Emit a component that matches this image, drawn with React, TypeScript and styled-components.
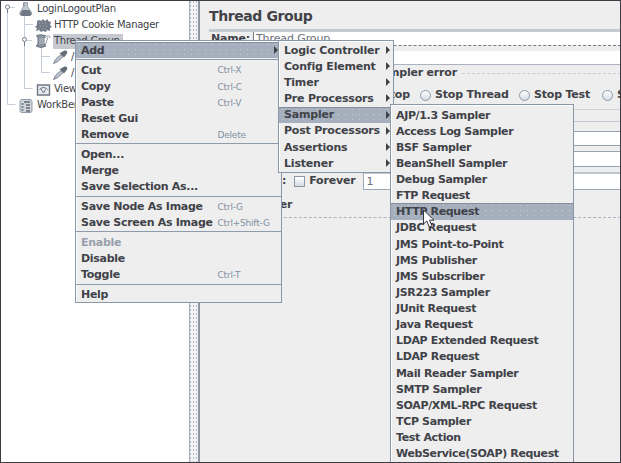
import React from "react";
import styled, { createGlobalStyle } from "styled-components";

const GlobalStyle = createGlobalStyle`
  * { box-sizing: border-box; }
  html, body { margin: 0; width: 621px; height: 463px; overflow: hidden; }
  body { font: 11px/16px "DejaVu Sans", sans-serif; color: #404248; }
`;

const Frame = styled.div`
  position: relative;
  display: flex;
  width: 621px;
  height: 463px;
  overflow: hidden;
  background: #eee;
  &::after {
    content: "";
    position: absolute;
    inset: 0;
    border: 1px solid #3e3c40;
    pointer-events: none;
    z-index: 10;
  }
`;

const Tree = styled.aside`
  position: relative;
  width: 189px;
  padding-top: 1px;
  background: #fff;
  overflow: hidden;
`;

const TreeRow = styled.div<{ $indent: number }>`
  display: flex;
  align-items: center;
  height: 16.1px;
  padding-left: ${(p) => p.$indent}px;
  font-size: 10px;
  white-space: nowrap;
  svg { flex: none; }
`;

const TreeLabel = styled.span<{ $selected?: boolean; $gap?: number }>`
  height: 15px;
  line-height: 14px;
  margin-left: ${(p) => p.$gap ?? 1}px;
  padding: 0 3px 0 1px;
  letter-spacing: -0.25px;
  background: ${(p) => (p.$selected ? "#c6cad0" : "transparent")};
`;

const TreeLines = styled.svg`
  position: absolute;
  left: 0;
  top: 0;
`;

const Splitter = styled.div`
  width: 11px;
  border-left: 1px solid #a4adb8;
  border-right: 2px solid #8e96a2;
  background: radial-gradient(circle, #b4bbc4 0.6px, transparent 0.8px) 2px 0 / 3px 4px, #f2f3f4;
`;

const Content = styled.main`
  flex: 1;
  min-width: 0;
  padding-left: 9px;
  font-weight: bold;
  letter-spacing: -0.2px;
  white-space: nowrap;
`;

const Title = styled.h1`
  margin: 0;
  height: 29px;
  padding-top: 7px;
  font-size: 14px;
  line-height: 19px;
  letter-spacing: -0.4px;
`;

const NameRow = styled.div`
  display: flex;
  height: 17px;
  border-top: 3px solid #c3cad2;
  border-bottom: 1px dashed #777b84;
  line-height: 13px;
`;

const NameLabel = styled.label`
  width: 44px;
  padding-left: 2px;
`;

const NameField = styled.div`
  flex: 1;
  padding-left: 2px;
  border-left: 1px solid #777b84;
  background: #fff;
  color: #6b707b;
  font-weight: normal;
  letter-spacing: -0.1px;
`;

const CommentField = styled.div`
  height: 14px;
  margin: 5px 0 0 44px;
  border-bottom: 1px solid #aab3bf;
  background: #fff;
`;

const ErrorLegend = styled.div`
  display: flex;
  align-items: center;
  gap: 5px;
  height: 16px;
  padding-left: 164px;
  &::after { content: ""; flex: 1; border-top: 1px dashed #c4cbd4; }
`;

const RadioRow = styled.div`
  display: flex;
  align-items: center;
  height: 29px;
  padding-left: 173px;
  border-bottom: 1px solid #ccd3dc;
`;

const RadioLabel = styled.span<{ $width: number }>`
  flex: none;
  width: ${(p) => p.$width}px;
`;

const Radio = styled.span`
  flex: none;
  width: 11px;
  height: 11px;
  margin-right: 4px;
  border: 1px solid #8d98a7;
  border-radius: 50%;
  background: linear-gradient(#fff, #d5dce4);
`;

const SectionEdge = styled.div`
  height: 12px;
  border-bottom: 1px solid #c0c8d2;
`;

const FieldStrip = styled.div<{ $gap: number; $h: number }>`
  height: ${(p) => p.$h}px;
  margin: ${(p) => p.$gap}px 0 0 44px;
  border: 1px solid #97a3b1;
  background: #fff;
`;

const LoopRow = styled.div`
  display: flex;
  align-items: center;
  height: 18px;
  margin-top: 5px;
  padding-left: 73px;
`;

const Checkbox = styled.span`
  width: 11px;
  height: 11px;
  margin: 0 4px 0 8px;
  border: 1px solid #8d98a7;
  background: linear-gradient(#fff, #d5dce4);
`;

const LoopField = styled.div`
  flex: 1;
  height: 18px;
  margin-left: 8px;
  padding-left: 2px;
  border: 1px solid #9da8b5;
  border-top: 2px solid #c0c7cf;
  background: #fff;
  color: #6b707b;
  font-weight: normal;
  line-height: 15px;
`;

const SchedulerRow = styled.div`
  height: 28px;
  padding: 7px 0 0 23px;
  border-bottom: 1px dashed #aab3bf;
`;

const Menu = styled.nav<{ $x: number; $y: number; $w: number; $h: number; $top?: number; $spacing: number }>`
  position: absolute;
  left: ${(p) => p.$x}px;
  top: ${(p) => p.$y}px;
  width: ${(p) => p.$w}px;
  height: ${(p) => p.$h}px;
  padding-top: ${(p) => p.$top ?? 1}px;
  border: 1px solid #8997a9;
  box-shadow: inset 1px 1px #fff;
  background: #eee;
  font-weight: bold;
  letter-spacing: ${(p) => p.$spacing}px;
  white-space: nowrap;
`;

const Item = styled.div<{ $active?: boolean; $disabled?: boolean }>`
  display: flex;
  align-items: center;
  height: 16.14px;
  padding-left: 5px;
  color: ${(p) => (p.$disabled ? "#98a0ac" : "#404248")};
  background: ${(p) =>
    p.$active
      ? "radial-gradient(circle, #c3cbd5 0.5px, transparent 0.8px) 0 0 / 7px 5px, #a5afbd"
      : "transparent"};
  box-shadow: ${(p) => (p.$active ? "inset 0 1px #858e9b" : "none")};
`;

const ItemText = styled.span<{ $w?: number }>`
  padding-top: 1.6px;
  width: ${(p) => (p.$w ? p.$w + "px" : "auto")};
`;

const Shortcut = styled.span`
  padding-top: 1px;
  color: #8290a3;
  font-size: 9px;
  font-weight: normal;
  letter-spacing: -0.2px;
`;

const Separator = styled.hr`
  height: 1px;
  margin: 1px 0 1.7px;
  border: 0;
  background: #8e9bac;
`;

const Arrow = styled.i`
  margin-left: auto;
  margin-right: 3px;
  border: 4px solid transparent;
  border-left-color: #404248;
  border-right-width: 0;
`;

const Pointer = styled.svg`
  position: absolute;
  left: 422px;
  top: 209px;
  z-index: 5;
`;

const Flask = () => (
  <svg width="14" height="16" viewBox="0 0 14 16">
    <path d="M4.5 1.5h4v4l4 6q1 3-2 3H3q-3 0-2-3l3.5-6z" fill="#c4cad2" stroke="#98a1ad" />
    <path d="M3.5 9h7l2 4-2 2H3l-2-2z" fill="#6f7884" />
    <path d="M5 2v4" stroke="#7d8792" />
  </svg>
);
const Cookie = () => (
  <svg width="17" height="16" viewBox="0 0 17 16">
    <path d="M2 4l2-1 2 1 2-2 2 2 3-2v2l3 1-1 3 2 2-2 1v3l-3-1-1 2-3-1-2 1-2-2-3 1 1-3-2-1 2-2z" fill="#747c87" />
    <path d="M4 6h9M5 9h9M4 12h8" stroke="#a4abb5" strokeDasharray="1 2" />
  </svg>
);
const Spool = () => (
  <svg width="17" height="16" viewBox="0 0 17 16">
    <path d="M1.5 2.5q4-1.5 9 0l-1.5 2.5v6l2 2q-5 3-10 0l2-2V5z" fill="#8a94a0" stroke="#6c7682" />
    <path d="M4 6h5M4 8h5M4 10h5" stroke="#b8c0ca" />
    <path d="M10 5q4-5 5 0M13 4l-3 9" fill="none" stroke="#8e99a7" />
  </svg>
);
const Dropper = () => (
  <svg width="17" height="16" viewBox="0 0 17 16">
    <path d="M1.5 14.5l2-4 5.5-5 2 2-5 5z" fill="#bcc4cd" stroke="#7c8590" />
    <path d="M7.5 4l4.5 4.5 1.5-2 1.5-2q1-3.5-2.5-3l-2 1-1.5 1z" fill="#656d78" />
  </svg>
);
const Viewer = () => (
  <svg width="15" height="16" viewBox="0 0 15 16">
    <path d="M1.5 3h12v10h-12z" fill="#e8ebef" stroke="#6e7783" strokeWidth="1.4" />
    <path d="M3.5 7.5q4-4 8 0M7.5 11l2-3.5M5 7l2.5 4" fill="none" stroke="#656e7a" />
  </svg>
);
const Bench = () => (
  <svg width="14" height="16" viewBox="0 0 14 16">
    <rect x="1" y="1.5" width="12" height="13" rx="2" fill="#d0d5db" stroke="#939daa" />
    <path d="M5 4h6M7 7h4M7 10h4M7 13h4" stroke="#616a76" strokeWidth="1.4" />
    <path d="M3.5 5v8" stroke="#7b8591" strokeWidth="2" strokeDasharray="2 1" />
  </svg>
);

type Entry = { label: string; shortcut?: string; active?: boolean; sub?: boolean; disabled?: boolean };

const contextGroups: Entry[][] = [
  [{ label: "Add", active: true, sub: true }],
  [
    { label: "Cut", shortcut: "Ctrl-X" },
    { label: "Copy", shortcut: "Ctrl-C" },
    { label: "Paste", shortcut: "Ctrl-V" },
    { label: "Reset Gui" },
    { label: "Remove", shortcut: "Delete" },
  ],
  [{ label: "Open..." }, { label: "Merge" }, { label: "Save Selection As..." }],
  [
    { label: "Save Node As Image", shortcut: "Ctrl-G" },
    { label: "Save Screen As Image", shortcut: "Ctrl+Shift-G" },
  ],
  [{ label: "Enable", disabled: true }, { label: "Disable" }, { label: "Toggle", shortcut: "Ctrl-T" }],
  [{ label: "Help" }],
];

const addItems = ["Logic Controller", "Config Element", "Timer", "Pre Processors", "Sampler", "Post Processors", "Assertions", "Listener"];

const samplers = [
  "AJP/1.3 Sampler", "Access Log Sampler", "BSF Sampler", "BeanShell Sampler", "Debug Sampler",
  "FTP Request", "HTTP Request", "JDBC Request", "JMS Point-to-Point", "JMS Publisher",
  "JMS Subscriber", "JSR223 Sampler", "JUnit Request", "Java Request", "LDAP Extended Request",
  "LDAP Request", "Mail Reader Sampler", "SMTP Sampler", "SOAP/XML-RPC Request", "TCP Sampler",
  "Test Action", "WebService(SOAP) Request",
];

const MenuItem = ({ label, active, sub, disabled, shortcut }: Entry) => (
  <Item $active={active} $disabled={disabled}>
    <ItemText $w={shortcut ? 136.5 : undefined}>{label}</ItemText>
    {shortcut && <Shortcut>{shortcut}</Shortcut>}
    {sub && <Arrow />}
  </Item>
);

export default function App() {
  return (
    <>
      <GlobalStyle />
      <Frame>
        <Tree>
          <TreeLines width="60" height="115" fill="none" stroke="#c5cdd7">
            <path d="M7.5 10v94.5h8M10 7.5h5M24.5 16v72.5h8M25 24.5h8M27 40.5h5M41.5 48v24.5h8M42 56.5h8" />
            <g stroke="#737c88" fill="#fff">
              <circle cx="7.5" cy="7" r="2" /><path d="M7.5 9v4" />
              <circle cx="24.5" cy="39.5" r="2" /><path d="M24.5 42v4" />
            </g>
          </TreeLines>
          <TreeRow $indent={19}><Flask /><TreeLabel $gap={3}>LoginLogoutPlan</TreeLabel></TreeRow>
          <TreeRow $indent={35}><Cookie /><TreeLabel>HTTP Cookie Manager</TreeLabel></TreeRow>
          <TreeRow $indent={35}><Spool /><TreeLabel $selected>Thread Group</TreeLabel></TreeRow>
          <TreeRow $indent={52}><Dropper /><TreeLabel>/</TreeLabel></TreeRow>
          <TreeRow $indent={52}><Dropper /><TreeLabel>/</TreeLabel></TreeRow>
          <TreeRow $indent={36}><Viewer /><TreeLabel $gap={2}>View Results Tree</TreeLabel></TreeRow>
          <TreeRow $indent={19}><Bench /><TreeLabel $gap={3}>WorkBench</TreeLabel></TreeRow>
        </Tree>
        <Splitter />
        <Content>
          <Title>Thread Group</Title>
          <NameRow><NameLabel>Name:</NameLabel><NameField>Thread Group</NameField></NameRow>
          <CommentField />
          <ErrorLegend>Sampler error</ErrorLegend>
          <RadioRow>
            <RadioLabel $width={38}>Stop</RadioLabel>
            <Radio /><RadioLabel $width={84}>Stop Thread</RadioLabel>
            <Radio /><RadioLabel $width={68}>Stop Test</RadioLabel>
            <Radio /><RadioLabel $width={90}>Stop Test Now</RadioLabel>
          </RadioRow>
          <SectionEdge />
          <FieldStrip $gap={9} $h={15} />
          <FieldStrip $gap={5} $h={16} />
          <LoopRow>:<Checkbox />Forever<LoopField>1</LoopField></LoopRow>
          <SchedulerRow>Scheduler</SchedulerRow>
        </Content>

        <Menu $x={75} $y={40} $w={207} $h={263} $spacing={-0.29}>
          {contextGroups.map((group, g) => (
            <React.Fragment key={g}>
              {g > 0 && <Separator />}
              {group.map((e) => <MenuItem key={e.label} {...e} />)}
            </React.Fragment>
          ))}
        </Menu>
        <Menu $x={278} $y={40} $w={116} $h={133} $spacing={-0.2}>
          {addItems.map((label) => <MenuItem key={label} label={label} sub active={label === "Sampler"} />)}
        </Menu>
        <Menu $x={390} $y={104} $w={184} $h={365} $top={1.7} $spacing={-0.35}>
          {samplers.map((label) => <MenuItem key={label} label={label} active={label === "HTTP Request"} />)}
        </Menu>
        <Pointer width="14" height="20" viewBox="0 0 14 20">
          <path d="M1.5 1v14l3.3-3 2.5 6 2.7-1.1-2.5-5.7h4.5z" fill="#fff" stroke="#35363b" />
        </Pointer>
      </Frame>
    </>
  );
}
